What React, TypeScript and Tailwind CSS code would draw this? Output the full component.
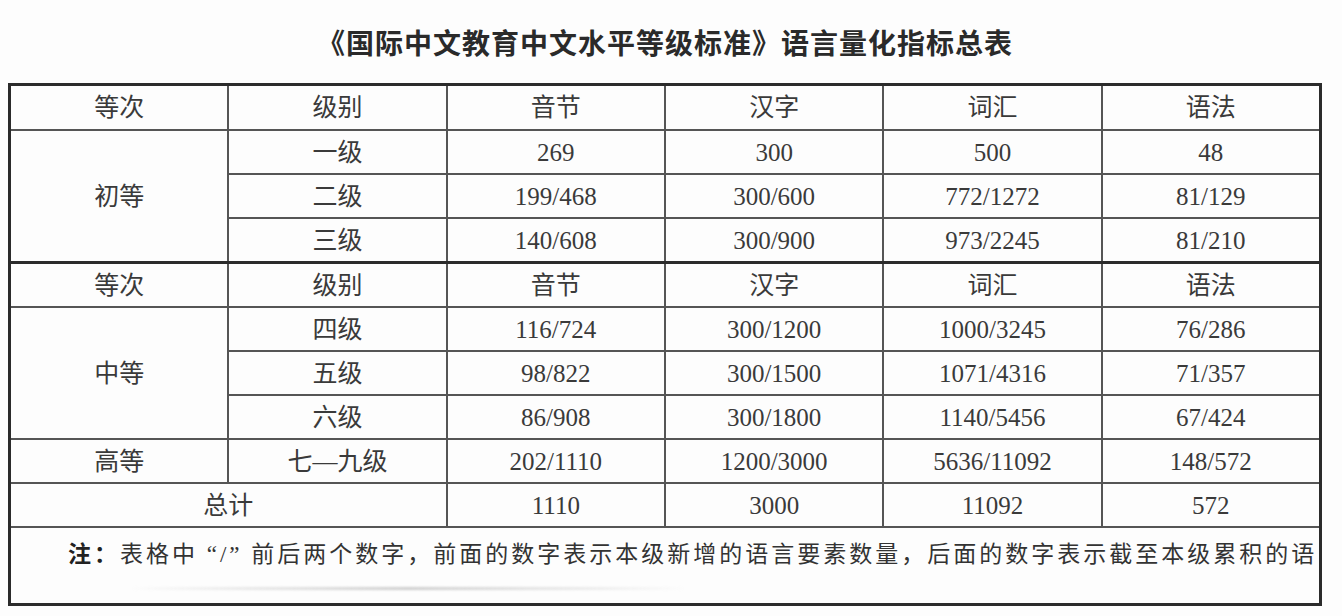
const HEAD = ["等次", "级别", "音节", "汉字", "词汇", "语法"];

const TOP_ROWS = [
  ["一级", "269", "300", "500", "48"],
  ["二级", "199/468", "300/600", "772/1272", "81/129"],
  ["三级", "140/608", "300/900", "973/2245", "81/210"],
];

const MID_ROWS = [
  ["四级", "116/724", "300/1200", "1000/3245", "76/286"],
  ["五级", "98/822", "300/1500", "1071/4316", "71/357"],
  ["六级", "86/908", "300/1800", "1140/5456", "67/424"],
];

const cell =
  "flex items-center justify-center bg-[#fdfdfd] text-[25px] leading-none text-[#3a3a3a]";

function Row({ cells }: { cells: string[] }) {
  return (
    <>
      {cells.map((c, i) => (
        <div key={i} className={cell}>
          {c}
        </div>
      ))}
    </>
  );
}

export default function App() {
  return (
    <div
      className="h-[616px] w-[1342px] overflow-hidden bg-[#fdfdfd]"
      style={{ fontFamily: '"Liberation Serif", "Noto Sans CJK SC", serif' }}
    >
      <div className="ml-[8px] w-[1314px]">
        <h1
          className="pt-[27px] text-center text-[28px] leading-[30px] font-bold tracking-[1px] text-[#2a2a2a]"
          style={{ fontFamily: '"Noto Sans CJK SC", sans-serif' }}
        >
          《国际中文教育中文水平等级标准》语言量化指标总表
        </h1>

        {/* upper part: 初等 */}
        <div className="mt-[26px] grid grid-cols-6 grid-rows-[43px_42px_42px_42px] gap-[2px] border-[3px] border-[#2b2b2b] bg-[#555]">
          <Row cells={HEAD} />
          <div className={`${cell} row-span-3`}>初等</div>
          {TOP_ROWS.map((r, i) => (
            <Row key={i} cells={r} />
          ))}
        </div>

        {/* lower part: 中等 / 高等 / 总计 / 注 */}
        <div className="grid grid-cols-6 grid-rows-[42px_42px_42px_42px_42px_42px_75px] gap-[2px] border-[3px] border-t-0 border-[#2b2b2b] bg-[#555]">
          <Row cells={HEAD} />
          <div className={`${cell} row-span-3`}>中等</div>
          {MID_ROWS.map((r, i) => (
            <Row key={i} cells={r} />
          ))}
          <Row cells={["高等", "七—九级", "202/1110", "1200/3000", "5636/11092", "148/572"]} />
          <div className={`${cell} col-span-2`}>总计</div>
          <Row cells={["1110", "3000", "11092", "572"]} />
          <div className="col-span-6 overflow-hidden bg-[#fdfdfd] pt-[14px] pl-[57px]">
            <div className="whitespace-nowrap text-[23px] leading-[26px] tracking-[3px] text-[#333]">
              <span className="font-bold text-[#222]">注：</span>
              表格中 “/” 前后两个数字，前面的数字表示本级新增的语言要素数量，后面的数字表示截至本级累积的语
            </div>
            <div className="mt-[19px] ml-[60px] h-[3px] w-[560px] rounded-full bg-gradient-to-r from-transparent via-[#cfcfcf] to-transparent blur-[1px]" />
          </div>
        </div>
      </div>
    </div>
  );
}
